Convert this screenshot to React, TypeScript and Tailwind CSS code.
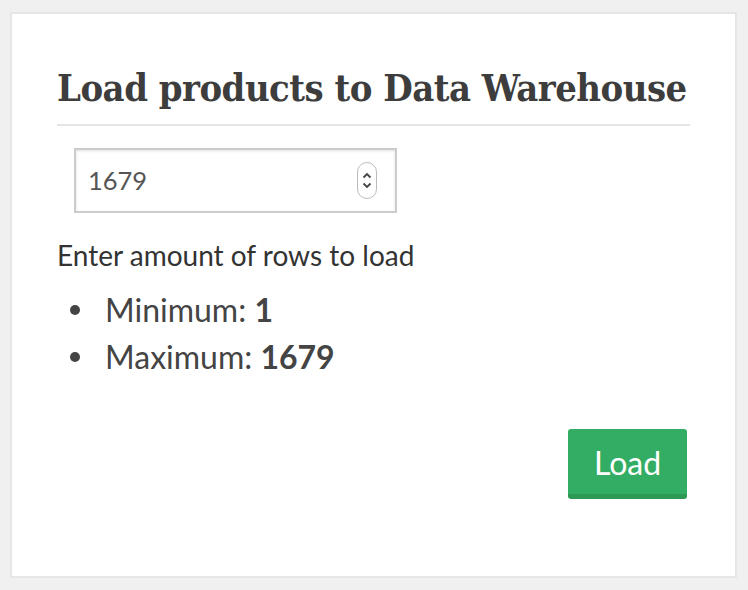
export default function App() {
  return (
    <div className="min-h-[590px] w-[748px] bg-[#f0f0f0] pt-[12px] pl-[10px] font-['Lato','Liberation_Sans',sans-serif]">
      <div className="h-[566px] w-[727px] border-2 border-[#e6e6e6] bg-white px-[45px] pt-[50px]">
        <h1 className="whitespace-nowrap font-['DejaVu_Serif_Condensed','DejaVu_Serif',serif] text-[37.8px] font-bold leading-[48px] tracking-[-0.5px] text-[#3d3d3d]">
          Load products to Data Warehouse
        </h1>
        <hr className="mt-[12px] border-t-2 border-[#e3e6e6]" />
        <div className="ml-[17px] mt-[22px] flex h-[65px] w-[323px] items-center border-2 border-[#cccccc] pl-[12px] pr-[18px] shadow-[inset_0_1px_3px_rgba(0,0,0,0.12)]">
          <span className="flex-1 text-[25.5px] text-[#555]">1679</span>
          <span className="flex h-[37px] w-[20px] flex-col items-center justify-center gap-[3px] rounded-[10px] border border-[#bbb]">
            <svg width="10" height="7" viewBox="0 0 10 7">
              <path d="M1.5 5.5 L5 2 L8.5 5.5" fill="none" stroke="#444" strokeWidth="1.8" />
            </svg>
            <svg width="10" height="7" viewBox="0 0 10 7">
              <path d="M1.5 1.5 L5 5 L8.5 1.5" fill="none" stroke="#444" strokeWidth="1.8" />
            </svg>
          </span>
        </div>
        <p className="mt-[25px] text-[28px] leading-[34px] text-[#333]">Enter amount of rows to load</p>
        <ul className="mt-[14px] pl-[13px] text-[32px] leading-[47px] text-[#444]">
          <li className="flex items-center">
            <span className="mr-[25px] h-[10px] w-[10px] rounded-full bg-[#444]" />
            <span>
              Minimum: <b>1</b>
            </span>
          </li>
          <li className="flex items-center">
            <span className="mr-[25px] h-[10px] w-[10px] rounded-full bg-[#444]" />
            <span>
              Maximum: <b>1679</b>
            </span>
          </li>
        </ul>
        <div className="mt-[49px] flex justify-end pr-[3px]">
          <button className="h-[70px] w-[119px] rounded-[3px] border-b-[5px] border-[#2c9a55] bg-[#34ad64] pt-[3px] text-[32px] text-white">
            Load
          </button>
        </div>
      </div>
    </div>
  );
}
